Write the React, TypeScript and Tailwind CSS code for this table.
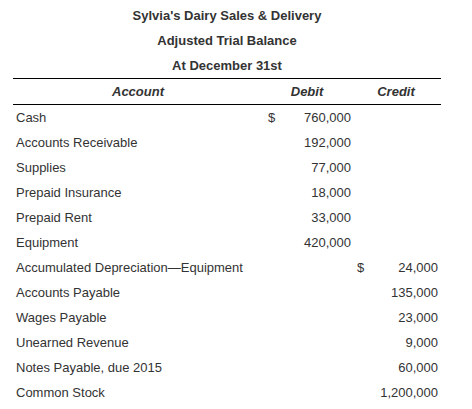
const rows: { name: string; debit?: string; credit?: string; dollar?: 'debit' | 'credit' }[] = [
  { name: 'Cash', debit: '760,000', dollar: 'debit' },
  { name: 'Accounts Receivable', debit: '192,000' },
  { name: 'Supplies', debit: '77,000' },
  { name: 'Prepaid Insurance', debit: '18,000' },
  { name: 'Prepaid Rent', debit: '33,000' },
  { name: 'Equipment', debit: '420,000' },
  { name: 'Accumulated Depreciation\u2014Equipment', credit: '24,000', dollar: 'credit' },
  { name: 'Accounts Payable', credit: '135,000' },
  { name: 'Wages Payable', credit: '23,000' },
  { name: 'Unearned Revenue', credit: '9,000' },
  { name: 'Notes Payable, due 2015', credit: '60,000' },
  { name: 'Common Stock', credit: '1,200,000' },
]

export default function App() {
  return (
    <div className="w-[472px] h-[409px] bg-white text-[#333] text-[13px] font-['Liberation_Sans',Arial,sans-serif] overflow-hidden">
      <div className="ml-[13px] w-[428px] pt-[3px]">
        <div className="font-bold text-center leading-[25px]">
          <p>Sylvia's Dairy Sales &amp; Delivery</p>
          <p>Adjusted Trial Balance</p>
          <p>At December 31st</p>
        </div>

        <div className="grid grid-cols-[250px_88px_90px] border-y border-black font-bold italic leading-[25px] text-center">
          <div>Account</div>
          <div>Debit</div>
          <div>Credit</div>
        </div>

        {rows.map(r => (
          <div key={r.name} className="grid grid-cols-[250px_88px_90px] leading-[25px]">
            <div className="pl-[3px] whitespace-nowrap">{r.name}</div>
            <div className="flex justify-between pl-[5px]">
              <span>{r.dollar === 'debit' ? '$' : ''}</span>
              <span>{r.debit}</span>
            </div>
            <div className="flex justify-between pl-[6px] pr-[3px]">
              <span>{r.dollar === 'credit' ? '$' : ''}</span>
              <span>{r.credit}</span>
            </div>
          </div>
        ))}
      </div>
    </div>
  )
}
